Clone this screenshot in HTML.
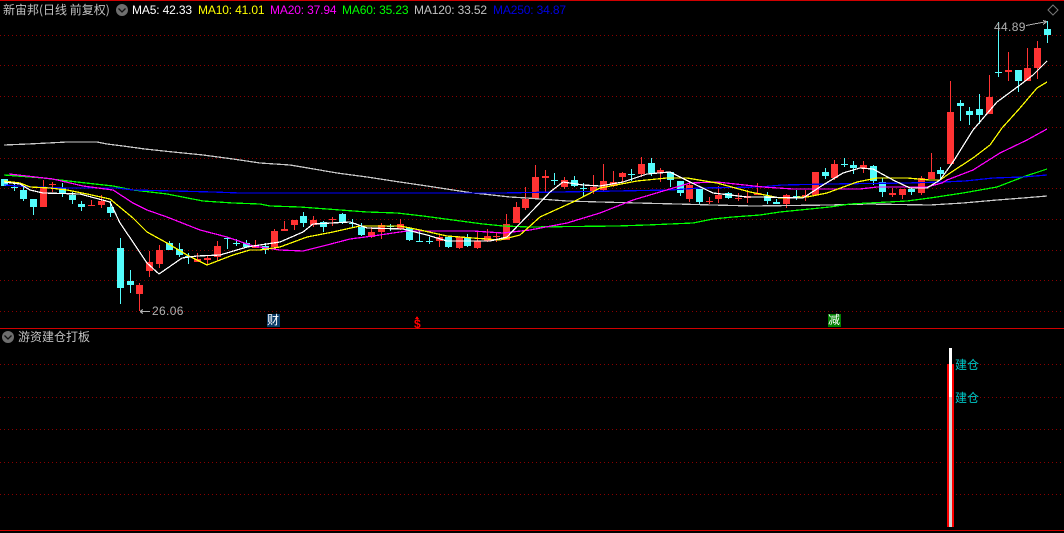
<!DOCTYPE html>
<html><head><meta charset="utf-8"><style>
html,body{margin:0;padding:0;background:#000}
#w{position:relative;width:1064px;height:533px;background:#000;overflow:hidden;font-family:"Liberation Sans","WenQuanYi Zen Hei",sans-serif}
svg{position:absolute;left:0;top:0}
.t{position:absolute;white-space:nowrap;font-size:12px;line-height:14px;letter-spacing:-.15px}
.n{letter-spacing:.35px}
.c{font-family:"WenQuanYi Zen Hei","Noto Sans CJK SC",sans-serif;color:#c0c0c0;letter-spacing:0}
.g{position:absolute;height:1px;background:repeating-linear-gradient(90deg,#8a0000 0 1px,transparent 1px 4px)}
</style></head><body><div id="w">
<div class="g" style="left:0;top:35px;width:1064px"></div>
<div class="g" style="left:0;top:65px;width:1064px"></div>
<div class="g" style="left:0;top:96px;width:1064px"></div>
<div class="g" style="left:0;top:127px;width:1064px"></div>
<div class="g" style="left:0;top:158px;width:1064px"></div>
<div class="g" style="left:0;top:188px;width:1064px"></div>
<div class="g" style="left:0;top:219px;width:1064px"></div>
<div class="g" style="left:0;top:250px;width:1064px"></div>
<div class="g" style="left:0;top:280px;width:1064px"></div>
<div class="g" style="left:0;top:311px;width:1064px"></div>
<div class="g" style="left:0;top:364px;width:1064px"></div>
<div class="g" style="left:0;top:397px;width:1064px"></div>
<div class="g" style="left:0;top:429px;width:1064px"></div>
<div class="g" style="left:0;top:462px;width:1064px"></div>
<div class="g" style="left:0;top:494px;width:1064px"></div>
<svg width="1064" height="533" viewBox="0 0 1064 533" shape-rendering="crispEdges">
<rect x="0" y="0" width="1064" height="1" fill="#d00000"/>
<rect x="0" y="328" width="1064" height="1" fill="#d00000"/>
<rect x="0" y="530" width="1064" height="1" fill="#d00000"/>
<!-- red wicks -->
<path fill="#ff3333" d="M43 180h1V207h-1zM52 182h1V192h-1zM91 200h1V206h-1zM101 195h1V208h-1zM139 283h1V311h-1zM149 251h1V277h-1zM159 245h1V268h-1zM197 253h1V262h-1zM207 255h1V265h-1zM217 241h1V261h-1zM255 240h1V248h-1zM274 229h1V247h-1zM284 221h1V231h-1zM294 220h1V230h-1zM313 216h1V227h-1zM332 217h1V226h-1zM371 227h1V238h-1zM381 223h1V239h-1zM400 219h1V230h-1zM439 235h1V247h-1zM459 236h1V249h-1zM477 232h1V249h-1zM487 229h1V242h-1zM496 233h1V242h-1zM506 214h1V240h-1zM516 202h1V223h-1zM525 187h1V210h-1zM535 165h1V199h-1zM545 170h1V193h-1zM564 177h1V189h-1zM593 175h1V194h-1zM603 164h1V191h-1zM613 171h1V187h-1zM622 172h1V182h-1zM641 157h1V177h-1zM660 168h1V182h-1zM689 183h1V202h-1zM709 197h1V204h-1zM718 186h1V203h-1zM738 193h1V201h-1zM747 190h1V203h-1zM757 183h1V195h-1zM786 194h1V208h-1zM805 190h1V201h-1zM815 172h1V195h-1zM834 160h1V180h-1zM863 161h1V173h-1zM892 188h1V197h-1zM902 189h1V199h-1zM921 176h1V195h-1zM931 153h1V179h-1zM950 81h1V164h-1zM989 75h1V114h-1zM1008 52h1V81h-1zM1027 48h1V81h-1zM1037 41h1V79h-1z"/>
<!-- red bodies -->
<path fill="#ff3333" d="M40 187h7v20h-7zM49 184h7v1h-7zM88 205h7v1h-7zM98 201h7v4h-7zM136 285h7v9h-7zM146 262h7v9h-7zM156 250h7v14h-7zM194 259h7v3h-7zM204 258h7v2h-7zM214 246h7v11h-7zM252 245h7v3h-7zM271 231h7v16h-7zM281 229h7v2h-7zM291 220h7v5h-7zM310 220h7v5h-7zM329 219h7v1h-7zM368 232h7v5h-7zM378 225h7v7h-7zM397 224h7v5h-7zM436 237h7v4h-7zM456 237h7v11h-7zM474 241h7v7h-7zM484 236h7v5h-7zM493 236h7v1h-7zM503 224h7v16h-7zM513 207h7v16h-7zM522 199h7v9h-7zM532 177h7v22h-7zM542 176h7v2h-7zM561 180h7v7h-7zM590 187h7v4h-7zM600 181h7v9h-7zM610 182h7v4h-7zM619 173h7v4h-7zM638 164h7v10h-7zM657 170h7v3h-7zM686 185h7v14h-7zM706 201h7v1h-7zM715 195h7v4h-7zM735 198h7v1h-7zM744 196h7v2h-7zM754 193h7v2h-7zM783 195h7v9h-7zM802 195h7v2h-7zM812 172h7v23h-7zM831 164h7v14h-7zM860 165h7v3h-7zM889 193h7v2h-7zM899 189h7v6h-7zM918 178h7v15h-7zM928 172h7v7h-7zM947 112h7v52h-7zM986 97h7v17h-7zM1005 70h7v2h-7zM1024 68h7v13h-7zM1034 48h7v20h-7z"/>
<!-- cyan wicks -->
<path fill="#54fcfc" d="M14 184h1V191h-1zM23 186h1V201h-1zM33 199h1V215h-1zM62 183h1V197h-1zM72 192h1V204h-1zM81 201h1V211h-1zM110 201h1V217h-1zM120 238h1V304h-1zM130 270h1V293h-1zM169 241h1V250h-1zM179 243h1V257h-1zM188 253h1V264h-1zM227 237h1V249h-1zM236 239h1V246h-1zM246 240h1V248h-1zM265 243h1V254h-1zM303 212h1V227h-1zM323 221h1V232h-1zM342 213h1V224h-1zM352 219h1V228h-1zM361 223h1V236h-1zM390 224h1V231h-1zM409 227h1V241h-1zM419 230h1V242h-1zM429 237h1V244h-1zM448 236h1V248h-1zM467 234h1V247h-1zM554 173h1V185h-1zM574 176h1V187h-1zM583 183h1V196h-1zM631 169h1V181h-1zM651 158h1V176h-1zM670 172h1V187h-1zM680 181h1V196h-1zM699 189h1V204h-1zM728 192h1V199h-1zM767 192h1V204h-1zM776 199h1V204h-1zM796 190h1V200h-1zM825 168h1V179h-1zM844 158h1V167h-1zM853 161h1V174h-1zM873 165h1V185h-1zM882 178h1V197h-1zM911 187h1V195h-1zM940 167h1V180h-1zM960 100h1V121h-1zM969 107h1V125h-1zM979 94h1V124h-1zM998 22h1V77h-1zM1018 70h1V92h-1zM1047 21h1V43h-1z"/>
<!-- cyan bodies -->
<path fill="#54fcfc" d="M1 179h7v7h-7zM11 187h7v1h-7zM20 190h7v9h-7zM30 199h7v8h-7zM59 188h7v6h-7zM69 195h7v5h-7zM78 204h7v3h-7zM107 207h7v6h-7zM117 248h7v40h-7zM127 281h7v4h-7zM166 243h7v7h-7zM176 249h7v6h-7zM185 256h7v1h-7zM224 238h7v1h-7zM233 243h7v1h-7zM243 243h7v4h-7zM262 246h7v4h-7zM300 216h7v7h-7zM320 222h7v5h-7zM339 214h7v8h-7zM349 223h7v1h-7zM358 227h7v8h-7zM387 226h7v1h-7zM406 228h7v12h-7zM416 241h7v1h-7zM426 241h7v1h-7zM445 237h7v10h-7zM464 237h7v9h-7zM551 180h7v1h-7zM571 180h7v6h-7zM580 188h7v1h-7zM628 174h7v1h-7zM648 163h7v10h-7zM667 172h7v8h-7zM677 181h7v12h-7zM696 189h7v13h-7zM725 193h7v5h-7zM764 196h7v5h-7zM773 202h7v2h-7zM793 196h7v2h-7zM822 172h7v4h-7zM841 164h7v1h-7zM850 165h7v3h-7zM870 166h7v15h-7zM879 182h7v10h-7zM908 189h7v3h-7zM937 170h7v4h-7zM957 103h7v3h-7zM966 111h7v4h-7zM976 109h7v6h-7zM995 72h7v1h-7zM1015 70h7v11h-7zM1044 29h7v6h-7z"/>
<!-- MAs -->
<g fill="none" stroke-width="1.25">
<polyline stroke="#c8c8c8" points="4,145 28,144 48,143 67,142 97,142 107,144 123,146 145,149 173,152 203,155 233,159 260,163 290,165 308,168 337,173 367,177 393,181 427,186 453,190 473,193 483,194 510,197 527,198 540,199 567,201 600,202 637,203 677,204 713,205 753,206 830,205 868,204 930,205 963,203 997,200 1023,198 1047,196"/>
<polyline stroke="#00ff00" points="4,175 43,178 77,182 113,186 133,190 167,194 203,201 233,203 260,204 270,206 300,207 327,209 367,212 397,213 423,216 453,220 483,224 503,226 530,227 617,226 647,225 693,223 713,219 733,217 760,215 780,212 810,209 830,207 850,204 907,201 930,198 963,193 997,187 1023,177 1047,169"/>
<polyline stroke="#0000ff" points="4,185 33,187 67,188 117,188 133,190 173,191 213,192 240,193 308,193 500,193 617,191 670,190 700,188 760,187 782,185 830,184 907,183 943,182 965,181 993,178 1023,177 1047,175"/>
<polyline stroke="#ff00ff" points="9,174 53,179 83,186 113,190 133,203 147,210 167,217 200,230 227,237 253,246 280,250 303,251 327,245 350,239 373,236 393,233 407,231 450,231 473,231 503,233 530,230 567,223 600,213 633,200 670,189 690,183 717,182 763,187 793,189 860,189 877,187 927,187 942,183 947,180 973,170 1000,153 1027,140 1047,129"/>
<polyline stroke="#ffff00" points="4,181 20,183 30,187 50,188 67,190 87,194 110,199 133,218 147,232 167,243 187,255 207,265 233,255 250,250 260,250 280,247 307,237 333,232 360,226 400,226 420,230 447,236 473,238 500,240 520,235 540,217 573,202 600,188 637,181 667,178 687,178 717,183 750,192 770,196 780,198 807,197 827,193 857,182 877,178 907,178 930,180 940,180 950,173 973,158 990,145 1002,128 1020,108 1037,88 1047,82"/>
<polyline stroke="#ffffff" points="4,182 20,184 30,190 43,193 80,194 110,202 120,223 137,248 147,263 159,274 182,258 197,256 220,255 247,247 260,245 280,242 303,232 313,224 350,222 367,228 403,229 427,235 447,241 490,241 507,237 533,210 550,192 563,182 583,185 600,186 623,182 647,174 670,172 690,182 713,193 747,197 760,197 803,198 823,185 843,173 860,168 873,169 893,180 910,188 927,188 940,180 953,162 973,130 997,102 1020,85 1033,75 1047,61"/>
</g>
<!-- annotation arrows -->
<g fill="none" stroke="#b0b0b0">
<path d="M140 311.5H150M140 311.5l3 -2M140 311.5l3 2"/>
<path d="M1026 25.500L1047 21.500M1047 21.500l-4 -1M1047 21.500l-4 3"/>
</g>
<!-- icons -->
<g shape-rendering="auto">
<circle cx="122" cy="10" r="6" fill="#6e6e6e"/>
<path d="M118.500 8.500L122 12L125.500 8.500" fill="none" stroke="#111" stroke-width="1.300"/>
<circle cx="8" cy="337" r="6" fill="#6e6e6e"/>
<path d="M4.500 335.500L8 339L11.500 335.500" fill="none" stroke="#111" stroke-width="1.300"/>
<path d="M1053 5L1058 10L1053 15L1048 10Z" fill="none" stroke="#777" stroke-width="1"/>
</g>
<!-- badges -->
<rect x="267" y="314" width="13" height="13" fill="#0a3a66"/>
<rect x="828" y="314" width="13" height="13" fill="#008000"/>
<path d="M417 316l2 3h-4z" fill="#f00"/>
<!-- volume bar -->
<rect x="944" y="348" width="12" height="180" fill="#000"/>
<rect x="947" y="364" width="7" height="163" fill="#ff0000"/>
<rect x="949" y="348" width="3" height="49" fill="#ffffff"/>
<rect x="949" y="397" width="3" height="130" fill="#d0d0d0"/>
</svg>
<span class="t c" style="left:3px;top:3px">新宙邦(日线 前复权)</span>
<span class="t" style="left:132px;top:3px;color:#fff">MA5: 42.33</span>
<span class="t" style="left:198px;top:3px;color:#ff0">MA10: 41.01</span>
<span class="t" style="left:270px;top:3px;color:#f0f">MA20: 37.94</span>
<span class="t" style="left:342px;top:3px;color:#0f0">MA60: 35.23</span>
<span class="t" style="left:414px;top:3px;color:#c0c0c0">MA120: 33.52</span>
<span class="t" style="left:493px;top:3px;color:#0000e0">MA250: 34.87</span>
<span class="t n" style="left:994px;top:20px;color:#b0b0b0">44.89</span>
<span class="t n" style="left:152px;top:304px;color:#b0b0b0">26.06</span>
<span class="t c" style="left:267px;top:313px;color:#fff">财</span>
<span class="t" style="left:414px;top:317px;color:#f00;font-weight:bold">$</span>
<span class="t c" style="left:828px;top:313px;color:#fff">减</span>
<span class="t c" style="left:18px;top:330px">游资建仓打板</span>
<span class="t c" style="left:955px;top:358px;color:#00c8c8">建仓</span>
<span class="t c" style="left:955px;top:391px;color:#00c8c8">建仓</span>
</div></body></html>
